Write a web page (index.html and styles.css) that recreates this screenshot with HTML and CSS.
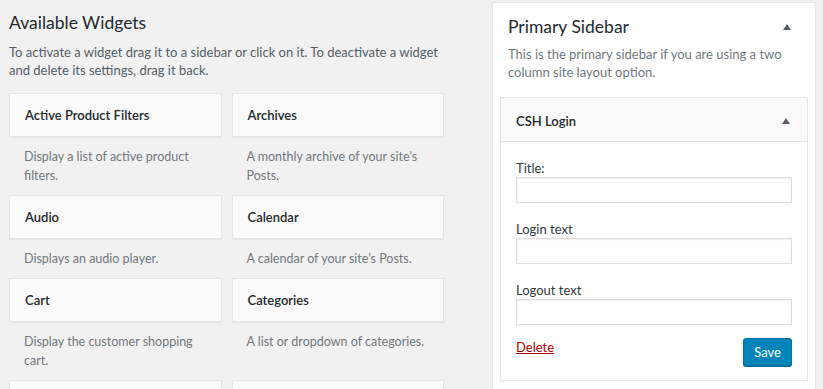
FILE: index.html
```html
<!DOCTYPE html>
<html lang="en">
    <head>
        <meta charset="UTF-8" />
        <title>Widgets</title>
        <link rel="stylesheet" href="styles.css">
    </head>
    <body>
        <div class="pantalla">
            <!-- WIDGETS DISPONIBLES -->
            <div class="disponibles">
                <h2 class="titulo">Available Widgets</h2>
                <p class="intro">To activate a widget drag it to a sidebar or click on it. To deactivate a widget
                    and delete its settings, drag it back.</p>

                <div class="lista-widgets">
                    <div class="widget">
                        <div class="widget-top">Active Product Filters</div>
                        <div class="widget-desc">Display a list of active product filters.</div>
                    </div>
                    <div class="widget">
                        <div class="widget-top">Archives</div>
                        <div class="widget-desc">A monthly archive of your site’s Posts.</div>
                    </div>
                    <div class="widget">
                        <div class="widget-top">Audio</div>
                        <div class="widget-desc">Displays an audio player.</div>
                    </div>
                    <div class="widget">
                        <div class="widget-top">Calendar</div>
                        <div class="widget-desc">A calendar of your site’s Posts.</div>
                    </div>
                    <div class="widget">
                        <div class="widget-top">Cart</div>
                        <div class="widget-desc">Display the customer shopping cart.</div>
                    </div>
                    <div class="widget">
                        <div class="widget-top">Categories</div>
                        <div class="widget-desc">A list or dropdown of categories.</div>
                    </div>
                    <div class="widget">
                        <div class="widget-top"></div>
                    </div>
                    <div class="widget">
                        <div class="widget-top"></div>
                    </div>
                </div>
            </div>

            <!-- BARRA LATERAL -->
            <div class="lateral">
                <div class="lateral-nombre">
                    <h2 class="titulo">Primary Sidebar</h2>
                    <span class="flecha"></span>
                </div>
                <p class="lateral-desc">This is the primary sidebar if you are using a two column site layout option.</p>

                <div class="widget-abierto">
                    <div class="widget-cabecera">
                        <span>CSH Login</span>
                        <span class="flecha"></span>
                    </div>
                    <div class="widget-dentro">
                        <p class="campo">
                            <label for="titulo">Title:</label>
                            <input id="titulo" type="text" />
                        </p>
                        <p class="campo">
                            <label for="login">Login text</label>
                            <input id="login" type="text" />
                        </p>
                        <p class="campo">
                            <label for="logout">Logout text</label>
                            <input id="logout" type="text" />
                        </p>
                        <div class="acciones">
                            <a href="#" class="borrar">Delete</a>
                            <button class="guardar">Save</button>
                        </div>
                    </div>
                </div>
            </div>
        </div>
    </body>
</html>
```

FILE: styles.css
```css
/* ESTILOS "WIDGETS" */
* {
    box-sizing: border-box;
    margin: 0;
    padding: 0;
}

html, body {
    height: 389px;
    overflow: hidden;
}

body {
    font-family: Lato, sans-serif;
    font-size: 13px;
    line-height: 18.2px;
    color: #23282d;
    background: #f1f1f1;
}

.pantalla {
    display: flex;
    align-items: flex-start;
    padding-left: 9px;
}

.titulo {
    font-size: 17.5px;
    font-weight: 400;
    line-height: 26px;
    color: #23282d;
}

/* IZQUIERDA */
.disponibles {
    width: 435px;
    padding-top: 10px;
}

.intro {
    margin: 7px 0 14px;
    color: #555d66;
}

.lista-widgets {
    display: grid;
    grid-template-columns: 1fr 1fr;
    column-gap: 10px;
}

.widget-top {
    height: 44px;
    padding: 0 15px;
    font-weight: 600;
    line-height: 42px;
    background: #fafafa;
    border: 1px solid #e5e5e5;
    box-shadow: 0 1px 1px rgba(0, 0, 0, 0.04);
}

.widget-desc {
    padding: 10px 15px 10px;
    font-size: 12.5px;
    line-height: 19px;
    color: #72777c;
}

/* DERECHA */
.lateral {
    width: 324px;
    height: 400px;
    margin: 2px 0 0 48px;
    padding: 0 7px;
    background: white;
    border: 1px solid #e5e5e5;
}

.lateral-nombre {
    display: flex;
    justify-content: space-between;
    align-items: center;
    padding: 11px 17px 0 8px;
}

.flecha {
    width: 0;
    height: 0;
    border-left: 4px solid transparent;
    border-right: 4px solid transparent;
    border-bottom: 6px solid #555d66;
}

.lateral-desc {
    margin: 5px 0 16px;
    padding: 0 8px;
    color: #72777c;
}

.widget-abierto {
    border: 1px solid #e5e5e5;
}

.widget-cabecera {
    display: flex;
    justify-content: space-between;
    align-items: center;
    height: 44px;
    padding: 2px 17px 0 15px;
    font-weight: 600;
    background: #fafafa;
    border-bottom: 1px solid #e5e5e5;
}

.widget-dentro {
    padding: 17px 15px 14px;
}

.campo {
    margin-bottom: 17px;
}

.campo label {
    display: block;
    line-height: 18px;
    color: #32373c;
}

.campo input {
    display: block;
    width: 100%;
    height: 26px;
    border: 1px solid #ddd;
    box-shadow: inset 0 1px 2px rgba(0, 0, 0, 0.07);
    outline: none;
}

.acciones {
    display: flex;
    justify-content: space-between;
    align-items: flex-start;
    margin-top: -4px;
}

.borrar {
    line-height: 19px;
    color: #a00;
    text-decoration: underline;
}

.guardar {
    height: 28px;
    padding: 0 10px;
    font-family: Lato, sans-serif;
    font-size: 13px;
    color: white;
    background: #0085ba;
    border: 1px solid #0073aa;
    border-radius: 3px;
    box-shadow: 0 1px 0 #006799;
    cursor: pointer;
}
```
